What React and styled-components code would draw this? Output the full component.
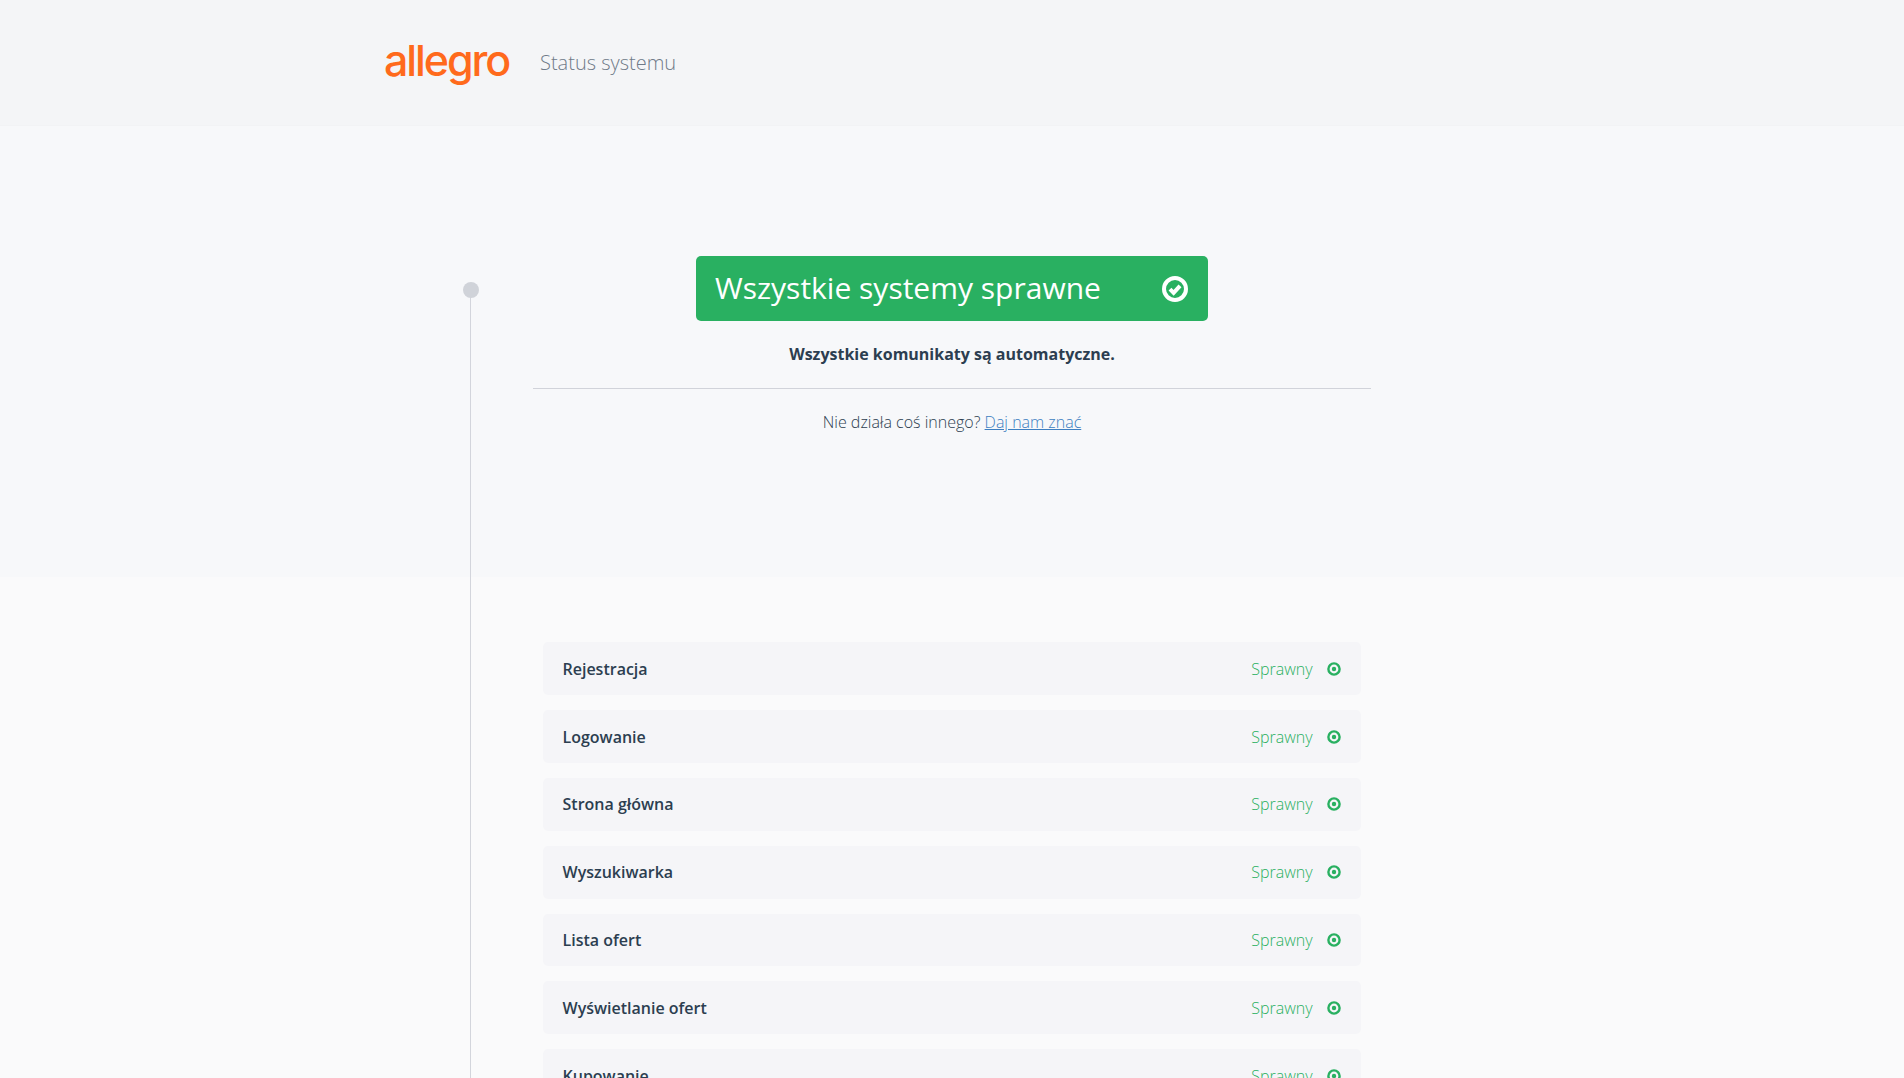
import styled, { createGlobalStyle } from "styled-components"

const GlobalStyle = createGlobalStyle`
    html, body {
        margin: 0;
        padding: 0;
        height: 100%;
        overflow: hidden;
        background: #fafafb;
        font-family: "Open Sans", "Noto Sans", sans-serif;
        color: #2c3e50;
    }
    * {
        box-sizing: border-box;
    }
`

const services = [
    "Rejestracja",
    "Logowanie",
    "Strona główna",
    "Wyszukiwarka",
    "Lista ofert",
    "Wyświetlanie ofert",
    "Kupowanie",
]

function CheckIcon() {
    return (
        <svg width="26" height="26" viewBox="0 0 26 26" fill="none">
            <circle cx="13" cy="13" r="11" stroke="#fff" strokeWidth="4" />
            <path d="M8 13.2l3.6 3.6 6.4-7" stroke="#fff" strokeWidth="4" />
        </svg>
    )
}

function StatusDot() {
    return (
        <svg width="14" height="14" viewBox="0 0 14 14" fill="none">
            <circle cx="7" cy="7" r="5.6" stroke="#29b061" strokeWidth="2.4" />
            <circle cx="7" cy="7" r="2.2" fill="#29b061" />
        </svg>
    )
}

export default function App() {
    return (
        <>
            <GlobalStyle />
            <Header>
                <HeaderInner>
                    <Logo>allegro</Logo>
                    <HeaderTitle>Status systemu</HeaderTitle>
                </HeaderInner>
            </Header>
            <Main>
                <Timeline>
                    <TimelineDot />
                </Timeline>
                <Hero>
                    <Banner>
                        <BannerText>Wszystkie systemy sprawne</BannerText>
                        <CheckIcon />
                    </Banner>
                    <Notice>Wszystkie komunikaty są automatyczne.</Notice>
                    <Divider />
                    <Help>
                        Nie działa coś innego? <a href="#kontakt">Daj nam znać</a>
                    </Help>
                </Hero>
                <List>
                    {services.map((name) => (
                        <Row key={name}>
                            <RowName>{name}</RowName>
                            <RowStatus>
                                Sprawny
                                <StatusDot />
                            </RowStatus>
                        </Row>
                    ))}
                </List>
            </Main>
        </>
    )
}

const Header = styled.header`
    height: 126px;
    background: #f4f5f7;
    border-bottom: 1px solid #f2f3f5;
`

const HeaderInner = styled.div`
    height: 100%;
    padding-left: 384px;
    display: flex;
    align-items: center;
`

const Logo = styled.div`
    width: 156px;
    font-family: "Inter", "Open Sans", sans-serif;
    font-size: 43px;
    font-weight: 500;
    line-height: 1;
    letter-spacing: -2.1px;
    color: #ff6a1c;
    padding-bottom: 5px;
`

const HeaderTitle = styled.div`
    font-size: 20px;
    font-weight: 300;
    color: #6f7a88;
`

const Main = styled.main`
    position: relative;
`

const Timeline = styled.div`
    position: absolute;
    left: 470px;
    top: 164px;
    width: 1px;
    height: 1000px;
    background: #d3d5dc;
`

const TimelineDot = styled.div`
    position: absolute;
    left: -7px;
    top: -8px;
    width: 16px;
    height: 16px;
    border-radius: 50%;
    background: #d0d3d9;
`

const Hero = styled.section`
    height: 451px;
    padding-top: 130px;
    background: #f7f8fa;
    display: flex;
    flex-direction: column;
    align-items: center;
`

const Banner = styled.div`
    width: 512px;
    height: 65px;
    padding: 0 20.5px 0 19px;
    background: #29b061;
    border-radius: 5px;
    display: flex;
    align-items: center;
    justify-content: space-between;
    color: #fff;
`

const BannerText = styled.span`
    font-size: 30px;
    line-height: 1;
    padding-bottom: 2px;
`

const Notice = styled.p`
    margin: 21px 0 0;
    font-size: 16px;
    font-weight: 700;
    line-height: 24px;
`

const Divider = styled.hr`
    width: 838px;
    height: 1px;
    margin: 22px 0 0;
    border: 0;
    background: #d1d3da;
`

const Help = styled.p`
    margin: 21px 0 0;
    font-size: 16px;
    font-weight: 300;
    line-height: 24px;

    a {
        color: #3d7fc1;
    }
`

const List = styled.section`
    width: 818px;
    margin: 65.45px auto 0;
    display: flex;
    flex-direction: column;
    gap: 15px;
`

const Row = styled.div`
    height: 52.8px;
    padding: 0 20px 0 19.5px;
    background: #f5f5f8;
    border-radius: 5px;
    display: flex;
    align-items: center;
    justify-content: space-between;
`

const RowName = styled.div`
    font-size: 16px;
    font-weight: 600;
`

const RowStatus = styled.div`
    display: flex;
    align-items: center;
    gap: 14.5px;
    font-size: 16px;
    font-weight: 300;
    color: #29b061;
`
